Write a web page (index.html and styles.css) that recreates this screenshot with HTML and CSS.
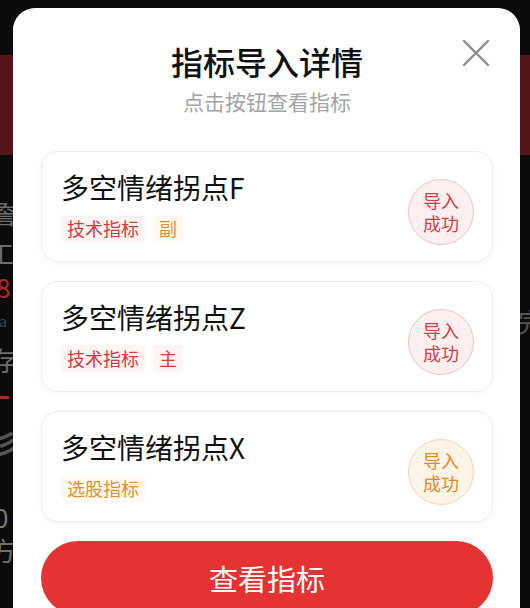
FILE: index.html
```html
<!DOCTYPE html>
<html lang="zh-CN">
<head>
  <meta charset="UTF-8">
  <meta name="viewport" content="width=device-width, initial-scale=1.0">
  <title>指标导入详情</title>
  <link rel="stylesheet" href="styles.css">
</head>
<body>
  <!-- Page behind the dialog -->
  <div class="page">
    <div class="page-top"></div>
    <div class="page-banner"></div>
    <div class="page-list">
      <div class="ghost ghost-a">詹</div>
      <div class="ghost ghost-b">工</div>
      <div class="ghost ghost-c">8</div>
      <div class="ghost ghost-d">ta</div>
      <div class="ghost ghost-e">存</div>
      <div class="ghost-line"></div>
      <div class="ghost ghost-f">彡</div>
      <div class="ghost ghost-g">0</div>
      <div class="ghost ghost-h">方</div>
    </div>
    <div class="ghost-right">完</div>
  </div>

  <!-- Dialog -->
  <div class="dialog">
    <button class="dialog-close" aria-label="关闭">
      <svg width="28" height="28" viewBox="0 0 28 28">
        <path d="M2 2 L26 26 M26 2 L2 26" stroke="#8c8c8c" stroke-width="2.4" stroke-linecap="round" fill="none"/>
      </svg>
    </button>

    <h1 class="dialog-title">指标导入详情</h1>
    <p class="dialog-sub">点击按钮查看指标</p>

    <div class="card-list">
      <div class="card">
        <div class="card-info">
          <div class="card-name">多空情绪拐点F</div>
          <div class="tags">
            <span class="tag tag-red">技术指标</span>
            <span class="tag tag-orange">副</span>
          </div>
        </div>
        <div class="badge badge-red">导入<br>成功</div>
      </div>

      <div class="card">
        <div class="card-info">
          <div class="card-name">多空情绪拐点Z</div>
          <div class="tags">
            <span class="tag tag-red">技术指标</span>
            <span class="tag tag-red">主</span>
          </div>
        </div>
        <div class="badge badge-red">导入<br>成功</div>
      </div>

      <div class="card">
        <div class="card-info">
          <div class="card-name">多空情绪拐点X</div>
          <div class="tags">
            <span class="tag tag-orange">选股指标</span>
          </div>
        </div>
        <div class="badge badge-orange">导入<br>成功</div>
      </div>
    </div>

    <button class="view-btn">查看指标</button>
  </div>
</body>
</html>
```

FILE: styles.css
```css
/* General */
* {
  box-sizing: border-box;
}

body {
  margin: 0;
  width: 530px;
  height: 608px;
  overflow: hidden;
  background: #0b0b0b;
  font-family: "Noto Sans CJK SC", "Noto Sans", sans-serif;
  position: relative;
}

/* Background page */
.page {
  height: 100%;
  position: relative;
}

.page-top {
  height: 55px;
  background: #0b0b0b;
}

.page-banner {
  height: 100px;
  background: #55161a;
}

.page-list {
  position: relative;
  height: 453px;
}

.ghost {
  position: absolute;
  left: -10px;
  font-size: 26px;
  line-height: 30px;
  color: #6e6e6e;
}

.ghost-a { top: 43px; }
.ghost-b { top: 83px; left: -12px; }
.ghost-c { top: 117px; left: -4px; color: #b3262d; }
.ghost-d { top: 158px; left: -6px; font-size: 14px; line-height: 16px; color: #444; }
.ghost-e { top: 190px; }
.ghost-f { top: 273px; left: -6px; font-weight: bold; color: #555; }
.ghost-g { top: 347px; left: -6px; color: #777; }
.ghost-h { top: 380px; }

.ghost-line {
  position: absolute;
  left: 0;
  top: 241px;
  width: 9px;
  height: 3px;
  background: #b3262d;
}

.ghost-right {
  position: absolute;
  left: 518px;
  top: 302px;
  font-size: 26px;
  color: #555;
}

/* Dialog */
.dialog {
  position: absolute;
  top: 8px;
  left: 13px;
  width: 507px;
  height: 660px;
  background: #fff;
  border-radius: 22px;
  padding: 33px 27px 0 28px;
}

.dialog-close {
  position: absolute;
  top: 31px;
  right: 30px;
  padding: 0;
  border: none;
  background: none;
  width: 28px;
  height: 28px;
  display: flex;
  cursor: pointer;
}

.dialog-title {
  margin: 0;
  text-align: center;
  font-size: 32px;
  line-height: 40px;
  font-weight: 500;
  color: #111;
}

.dialog-sub {
  margin: 6px 0 0;
  text-align: center;
  font-size: 21px;
  line-height: 28px;
  color: #a3a3a3;
}

/* Cards */
.card-list {
  margin-top: 36px;
  display: flex;
  flex-direction: column;
  gap: 19px;
}

.card {
  height: 111px;
  display: flex;
  align-items: center;
  justify-content: space-between;
  padding: 0 18px 0 19px;
  border: 1px solid #ededed;
  border-radius: 17px;
  box-shadow: 0 2px 6px rgba(0, 0, 0, 0.03);
}

.card-name {
  font-size: 28px;
  line-height: 32px;
  color: #111;
}

.tags {
  display: flex;
  gap: 8px;
  margin-top: 12px;
}

.tag {
  font-size: 18px;
  line-height: 27px;
  padding: 0 6px;
  border-radius: 4px;
}

.tag-red {
  color: #d53a3f;
  background: #fdf4f4;
}

.tag-orange {
  color: #e1902c;
  background: #fef9f2;
}

.badge {
  width: 66px;
  height: 66px;
  margin-top: 10px;
  border-radius: 50%;
  display: flex;
  align-items: center;
  justify-content: center;
  text-align: center;
  font-size: 18px;
  line-height: 23px;
}

.badge-red {
  color: #cf3f48;
  background: #fcefef;
  border: 1px solid #ecc4c8;
}

.badge-orange {
  color: #e2892a;
  background: #fdf4e8;
  border: 1px solid #efd8b8;
}

/* Button */
.view-btn {
  display: block;
  width: 100%;
  height: 74px;
  margin-top: 19px;
  border: none;
  border-radius: 37px;
  background: #e53232;
  color: #fff;
  font-family: inherit;
  font-size: 29px;
  cursor: pointer;
}
```
